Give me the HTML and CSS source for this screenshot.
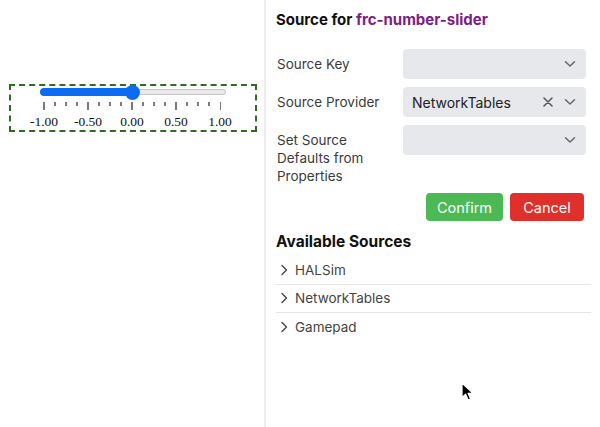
FILE: index.html
```html
<!DOCTYPE html>
<html>
<head>
<meta charset="utf-8">
<link rel="stylesheet" href="styles.css">
</head>
<body>
<div class="app">
  <div class="preview">
    <div class="widget">
      <div class="slider">
        <div class="track"></div>
        <div class="fill" style="width:93px"></div>
        <div class="thumb" style="left:85px"></div>
      </div>
      <div class="ticks">
        <i class="major"></i><i></i><i></i><i></i>
        <i class="major"></i><i></i><i></i><i></i>
        <i class="major"></i><i></i><i></i><i></i>
        <i class="major"></i><i></i><i></i><i></i>
        <i class="major"></i>
      </div>
      <div class="labels">
        <span>-1.00</span><span>-0.50</span><span>0.00</span><span>0.50</span><span>1.00</span>
      </div>
    </div>
  </div>
  <div class="panel">
    <h2 class="title">Source for <span class="tag">frc-number-slider</span></h2>
    <div class="form">
      <label class="lbl">Source Key</label>
      <div class="select">
        <span class="value"></span>
        <svg class="chev" width="12" height="8" viewBox="0 0 12 8"><path d="M1.5 1.8 L6 6 L10.5 1.8" fill="none" stroke="#666" stroke-width="1.5" stroke-linecap="round" stroke-linejoin="round"/></svg>
      </div>
      <label class="lbl">Source Provider</label>
      <div class="select">
        <span class="value">NetworkTables</span>
        <svg class="clear" width="10" height="10" viewBox="0 0 10 10"><path d="M1 1 L9 9 M9 1 L1 9" fill="none" stroke="#555" stroke-width="1.5" stroke-linecap="round"/></svg>
        <svg class="chev" width="12" height="8" viewBox="0 0 12 8"><path d="M1.5 1.8 L6 6 L10.5 1.8" fill="none" stroke="#666" stroke-width="1.5" stroke-linecap="round" stroke-linejoin="round"/></svg>
      </div>
      <label class="lbl">Set Source Defaults from Properties</label>
      <div class="select">
        <span class="value"></span>
        <svg class="chev" width="12" height="8" viewBox="0 0 12 8"><path d="M1.5 1.8 L6 6 L10.5 1.8" fill="none" stroke="#666" stroke-width="1.5" stroke-linecap="round" stroke-linejoin="round"/></svg>
      </div>
    </div>
    <div class="actions">
      <button class="btn confirm">Confirm</button>
      <button class="btn cancel">Cancel</button>
    </div>
    <h3 class="subtitle">Available Sources</h3>
    <ul class="sources">
      <li><svg class="arrow" width="8" height="12" viewBox="0 0 8 12"><path d="M2 1.5 L6.5 6 L2 10.5" fill="none" stroke="#444" stroke-width="1.4" stroke-linecap="round" stroke-linejoin="round"/></svg>HALSim</li>
      <li><svg class="arrow" width="8" height="12" viewBox="0 0 8 12"><path d="M2 1.5 L6.5 6 L2 10.5" fill="none" stroke="#444" stroke-width="1.4" stroke-linecap="round" stroke-linejoin="round"/></svg>NetworkTables</li>
      <li><svg class="arrow" width="8" height="12" viewBox="0 0 8 12"><path d="M2 1.5 L6.5 6 L2 10.5" fill="none" stroke="#444" stroke-width="1.4" stroke-linecap="round" stroke-linejoin="round"/></svg>Gamepad</li>
    </ul>
  </div>
</div>
<svg class="cursor" width="14" height="20" viewBox="0 0 14 20"><path d="M1 1 L1 15.5 L4.6 12.2 L7.2 18 L9.6 17 L7.1 11.3 L12 11.3 Z" fill="#000" stroke="#fff" stroke-width="1.2" stroke-linejoin="round"/></svg>
</body>
</html>
```
FILE: styles.css
```css
* { box-sizing: border-box; }
html, body { margin: 0; padding: 0; background: #fff; }
body { width: 600px; height: 427px; overflow: hidden; position: relative; font-family: Inter, "Liberation Sans", sans-serif; }

.app { display: flex; height: 427px; }

.preview { width: 266px; border-right: 2px solid #ececec; flex: none; padding: 84px 0 0 9px; }

.widget { width: 248px; height: 48px; border: 2px dashed #2f6b21; }

.slider { position: relative; margin: 2px 0 0 29px; width: 186px; height: 8px; }
.track { position: absolute; left: 0; right: 0; top: 1px; height: 6px; border-radius: 3px; background: #e9e9e9; border: 1px solid #c4c4c4; }
.fill { position: absolute; left: 0; top: 0; height: 8px; border-radius: 4px; background: #0b6cf3; }
.thumb { position: absolute; top: -3.5px; width: 15px; height: 15px; border-radius: 50%; background: #0b6cf3; }

.ticks { display: flex; justify-content: space-between; align-items: flex-start; margin: 6px 0 0 32px; width: 178px; height: 8px; }
.ticks i { display: block; width: 1.5px; height: 4px; background: #7a7a7a; }
.ticks i.major { height: 8px; }

.labels { display: flex; margin: 4px 0 0 11px; font-family: "Liberation Serif", serif; font-size: 13.5px; line-height: 15px; color: #111; }
.labels span { width: 44px; text-align: center; }

.panel { flex: 1; padding: 10px 14px 0 10px; }
.title { margin: 0; font-size: 15px; line-height: 20px; font-weight: 700; color: #111; }
.tag { color: #7b2182; }

.form { display: grid; grid-template-columns: 126px 1fr; row-gap: 8px; margin-top: 19px; padding-left: 1px; }
.lbl { font-size: 13.5px; line-height: 18px; color: #3b3b3b; padding-top: 6px; padding-right: 8px; }
.select { height: 30px; background: #e6e8eb; border-radius: 4px; display: flex; align-items: center; padding: 0 10px 0 9px; }
.value { flex: 1; font-size: 14px; color: #222; }
.clear { margin-right: 11px; }
.chev { margin-right: 0; }

.actions { display: flex; justify-content: flex-end; gap: 7px; margin-top: 8px; padding-right: 2px; }
.btn { border: 0; border-radius: 4px; height: 28px; font-family: Inter, "Liberation Sans", sans-serif; font-size: 14.5px; color: #fff; padding: 0; }
.confirm { width: 77px; background: #4bb954; }
.cancel { width: 74px; background: #e0302c; }

.subtitle { margin: 11px 0 0; font-size: 15.5px; line-height: 20px; font-weight: 700; color: #111; }

.sources { list-style: none; margin: 4px -5px 0 0; padding: 0; }
.sources li { display: flex; align-items: center; height: 28.5px; border-bottom: 1px solid #e6e6e6; font-size: 13.5px; color: #444; padding-left: 4px; }
.sources li:last-child { border-bottom: 0; }
.arrow { margin-right: 7px; }

.cursor { position: absolute; left: 461px; top: 382px; }
```
